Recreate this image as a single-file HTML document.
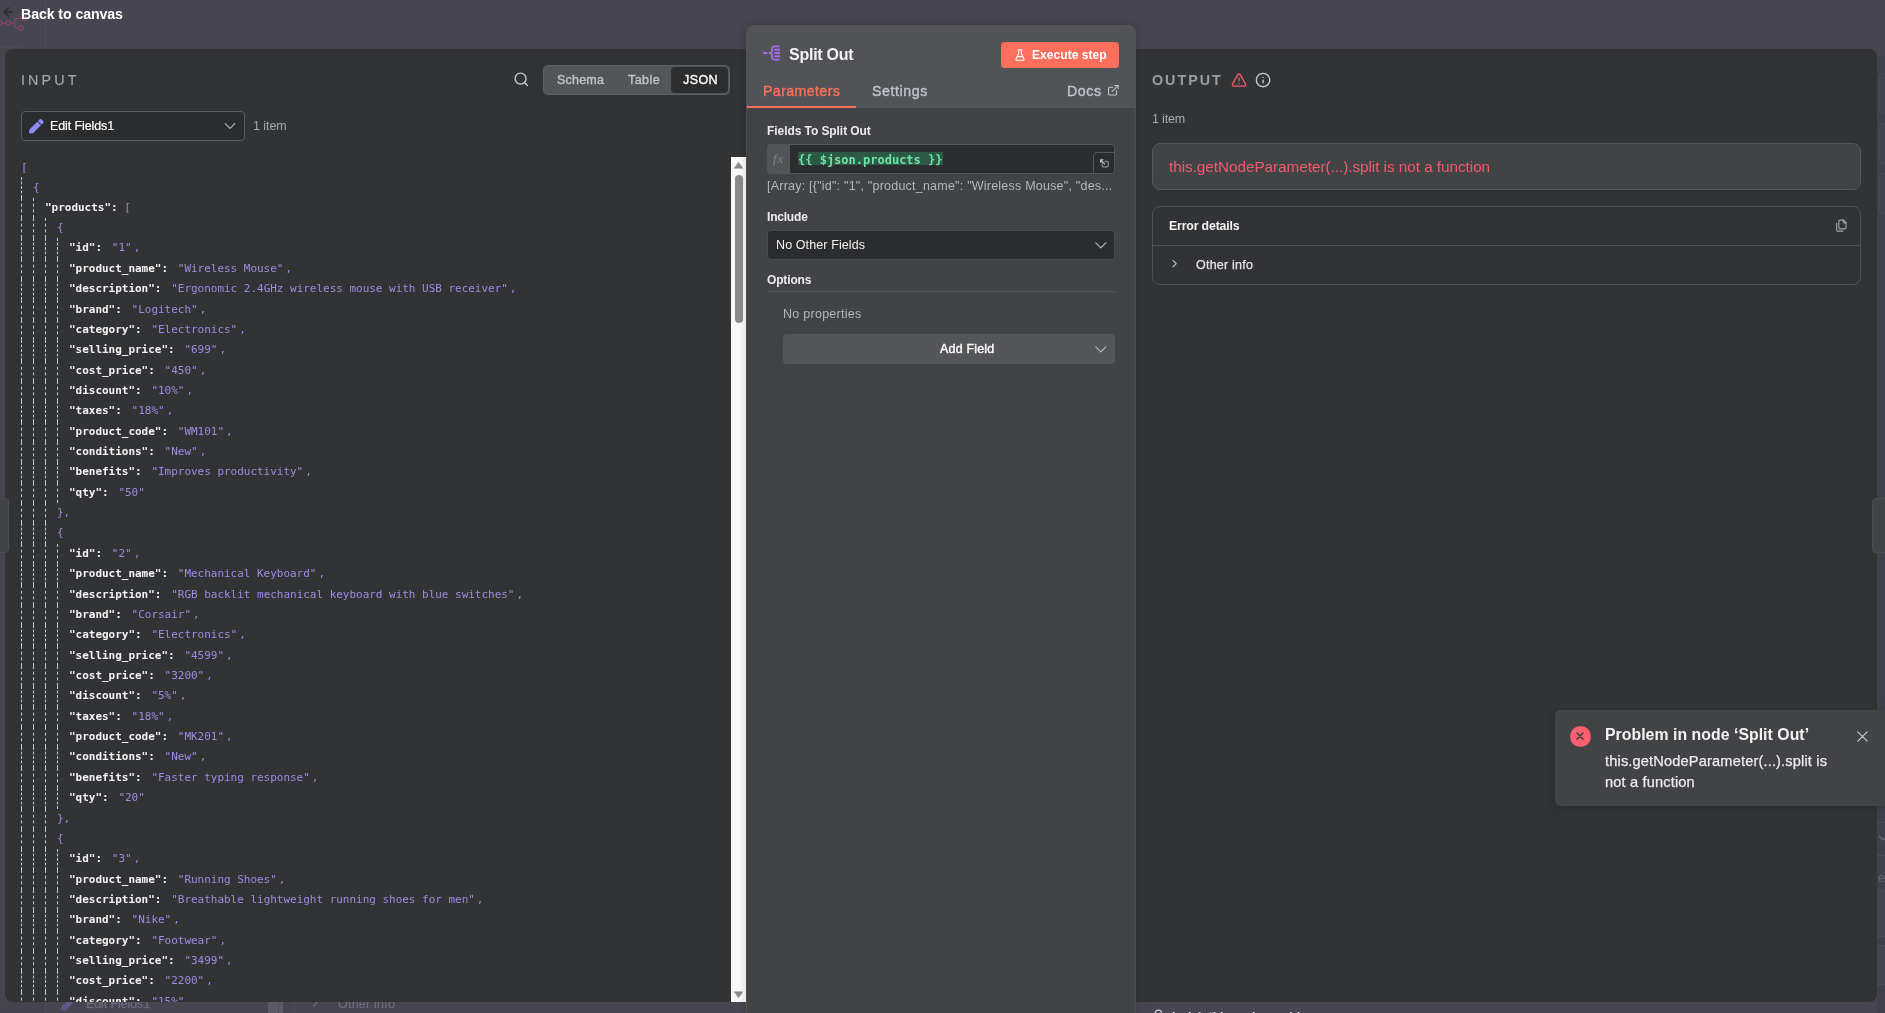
<!DOCTYPE html>
<html lang="en">
<head>
<meta charset="utf-8">
<title>n8n - Split Out</title>
<style>
*{box-sizing:border-box}
html,body{margin:0;padding:0}
body{width:1885px;height:1013px;overflow:hidden;position:relative;background:#464550;font-family:"Liberation Sans",sans-serif;color:#f0f0f2;-webkit-font-smoothing:antialiased}
.a{position:absolute}
.t{position:absolute;white-space:nowrap;line-height:1;will-change:transform}
svg{position:absolute;overflow:visible}

/* panels */
#inp{left:5px;top:49px;width:760px;height:953px;background:#323335;border-radius:8px 0 0 8px}
#outp{left:1120px;top:49px;width:757px;height:953px;background:#323335;border-radius:0 8px 8px 0}
#mid{left:746px;top:25px;width:390px;height:990px;background:#424345;border-radius:8px 8px 0 0;overflow:hidden;box-shadow:0 0 10px rgba(0,0,0,.16)}
#midh{left:0;top:0;width:390px;height:83px;background:#525356}

/* json */
#json{will-change:transform;left:21px;top:157px;width:705px;height:845px;overflow:hidden;font-family:"DejaVu Sans Mono","Liberation Mono",monospace;font-size:11px;letter-spacing:-0.022px;color:#9b8ee0}
.ln{height:20.36px;line-height:20.36px;white-space:pre;overflow:hidden}
.u{display:inline-block;width:12px;height:20.36px;border-left:1px dashed #bfcbd9;vertical-align:top}
.k{color:#f3f3f5;font-weight:bold}
.v{margin-left:1.2px;padding:0 2px}
.br{font-weight:normal}
.s1{position:relative;top:1px}
</style>
</head>
<body>

<!-- backdrop remnants -->
<div class="a" id="bgstuff">
  <div class="a" style="left:45px;top:0;width:1px;height:1013px;background:#4b4a56"></div>
  <div class="a" style="left:0;top:47px;width:28px;height:1px;background:linear-gradient(90deg,#4b4a56 60%,#464550)"></div>
  <!-- right strip remnants -->
  <div class="a" style="left:1877px;top:56px;width:8px;height:957px;background:#41414c"></div>
  <div class="a" style="left:1879px;top:73px;width:20px;height:41px;border:1px solid #4a4a56;border-radius:4px;background:#43434e"></div>
  <div class="a" style="left:1879px;top:123px;width:20px;height:41px;border:1px solid #4a4a56;border-radius:4px;background:#43434e"></div>
  <div class="a" style="left:1879px;top:173px;width:20px;height:41px;border:1px solid #4a4a56;border-radius:4px;background:#43434e"></div>
  <div class="a" style="left:1877px;top:822px;width:8px;height:1px;background:#4c4c58"></div>
  <div class="a" style="left:1877px;top:855px;width:8px;height:1px;background:#4c4c58"></div>
  <div class="a" style="left:1877px;top:890px;width:8px;height:47px;background:#45454f;border-top:1px solid #4c4c58;border-bottom:1px solid #4c4c58"></div>
  <div class="a" style="left:1877px;top:945px;width:8px;height:40px;background:#45454f;border-top:1px solid #4c4c58;border-bottom:1px solid #4c4c58"></div>
  <svg style="left:1877px;top:834px" width="8" height="8" viewBox="0 0 8 8" fill="none" stroke="#6c6c7b" stroke-width="1.200" stroke-linecap="round" stroke-linejoin="round"><path d="M2.500 2.500l3.500 3.500 3.500-3.500"/></svg>
  <div class="t" id="bg_er" style="left:1877.500px;top:871px;font-size:13px;color:#63637a">er</div>
  <!-- bottom strip remnants -->
  <div class="a" style="left:0;top:1002px;width:45px;height:11px;background:#44434e"></div>
  <div class="a" style="left:268px;top:1002px;width:15px;height:11px;background:#5b5a66"></div>
  <div class="a" style="left:277.500px;top:1002px;width:1.500px;height:11px;background:#4e4d59"></div>
  <div class="a" style="left:294px;top:1002px;width:1px;height:11px;background:#4d4c58"></div>
  <svg style="left:60.500px;top:996px" width="15" height="15" viewBox="0 0 512 512"><path fill="#5b5b8e" d="M290.740 93.240l128.020 128.020-277.990 277.990-114.140 12.600C11.350 513.540-1.560 500.620.140 485.340l12.700-114.220 277.900-277.880zm207.200-19.060l-60.110-60.110c-18.750-18.750-49.160-18.750-67.910 0l-56.550 56.550 128.020 128.020 56.550-56.550c18.750-18.760 18.750-49.160 0-67.910z"/></svg>
  <div class="t" id="bg_edit" style="left:86px;top:998px;font-size:12.5px;font-weight:normal;color:#6c6c7b;letter-spacing:-0.11px;-webkit-text-stroke:0.3px #6c6c7b">Edit Fields1</div>
  <svg style="left:312px;top:997px" width="8" height="10" viewBox="0 0 8 10" fill="none" stroke="#6c6c7b" stroke-width="1.200" stroke-linecap="round" stroke-linejoin="round"><path d="M1.500 1l4 4-4 4"/></svg>
  <div class="t" id="bg_other" style="left:338px;top:998px;font-size:12.5px;color:#6c6c7b;letter-spacing:0.22px;-webkit-text-stroke:0.2px #6c6c7b">Other info</div>
  <svg style="left:1151.500px;top:1009px" width="13" height="13" viewBox="0 0 24 24" fill="none" stroke="#c9cbd6" stroke-width="2.200" stroke-linecap="round" stroke-linejoin="round"><path d="M15 14c.2-1 .7-1.700 1.500-2.500 1-.9 1.500-2.200 1.500-3.500A6 6 0 0 0 6 8c0 1 .2 2.200 1.500 3.500.7.700 1.300 1.500 1.500 2.500"/><path d="M9 18h6"/><path d="M10 22h4"/></svg>
  <div class="t" id="bg_wish" style="left:1172px;top:1010.500px;font-size:12px;font-weight:bold;color:#e6e6ec">I wish this node would...</div>
</div>

<!-- back to canvas -->
<svg style="left:0;top:0" width="40" height="36" viewBox="0 0 40 36" fill="none" stroke-linecap="round" stroke-linejoin="round"><g stroke="#7b4560" stroke-width="1.5"><circle cx="-0.3" cy="22.9" r="2.2"/><circle cx="8.2" cy="22.9" r="2.1"/><path d="M2.100 22.900H5.900M10.500 22.900H14.300M21.800 18.300H17a2.500 2.500 0 0 0-2.500 2.500v4.200a2.500 2.500 0 0 0 2.500 2.500h1.500"/><circle cx="24.4" cy="18.200" r="2.200"/><circle cx="20.900" cy="27.900" r="2.200"/></g><path stroke="#2d2e33" stroke-width="1.500" d="M8.400 7.700L4.100 11.900l4.300 4.300M4.300 11.900h7.900"/></svg>
<div class="t" id="back" style="left:21px;top:7px;color:#fff;font-size:14.2px;font-weight:bold;letter-spacing:-0.1px">Back to canvas</div>

<!-- INPUT panel -->
<div class="a" id="inp"></div>
<div class="t" id="t_input" style="left:21px;top:72.8px;color:#a3a6b2;font-size:14.3px;font-weight:normal;letter-spacing:3.15px;-webkit-text-stroke:0.15px #a3a6b2">INPUT</div>

<!-- search icon -->
<svg style="left:512.600px;top:71.400px" width="16.500" height="16.500" viewBox="0 0 24 24" fill="none" stroke="#c6c9d5" stroke-width="2" stroke-linecap="round" stroke-linejoin="round"><circle cx="11" cy="11" r="8"/><path d="m21 21-4.340-4.340"/></svg>

<!-- view tabs -->
<div class="a" style="left:543px;top:65px;width:187px;height:30px;background:#545558;border:1px solid #5f6063;border-radius:5px"></div>
<div class="a" style="left:671px;top:67px;width:57px;height:26px;background:#2c2d2e;border-radius:4px"></div>
<div class="t" id="t_schema" style="left:557px;top:73.8px;color:#c3c5cd;font-size:12.5px;font-weight:normal;letter-spacing:0.2px;-webkit-text-stroke:0.35px #c3c5cd">Schema</div>
<div class="t" id="t_table" style="left:628px;top:73.8px;color:#c3c5cd;font-size:12.5px;font-weight:normal;letter-spacing:0.45px;-webkit-text-stroke:0.35px #c3c5cd">Table</div>
<div class="t" id="t_json" style="left:683px;top:73.8px;color:#fff;font-size:12.5px;font-weight:normal;letter-spacing:0.4px;-webkit-text-stroke:0.35px #fff">JSON</div>

<!-- node select -->
<div class="a" style="left:21px;top:111px;width:224px;height:30px;background:#2b2c2d;border:1px solid #5c5d60;border-radius:4px"></div>
<svg style="left:28.700px;top:118.700px" width="14.600" height="14.600" viewBox="0 0 512 512"><path fill="#8b8dff" d="M290.740 93.240l128.020 128.020-277.990 277.990-114.140 12.600C11.350 513.540-1.560 500.620.140 485.340l12.700-114.220 277.900-277.880zm207.200-19.060l-60.110-60.110c-18.750-18.750-49.160-18.750-67.910 0l-56.550 56.550 128.020 128.020 56.550-56.550c18.750-18.760 18.750-49.160 0-67.910z"/></svg>
<div class="t" id="t_editfields" style="left:50px;top:120.0px;color:#fff;font-size:12.5px;font-weight:normal;letter-spacing:-0.11px;-webkit-text-stroke:0.2px #fff">Edit Fields1</div>
<svg style="left:220px;top:118px" width="20" height="16" viewBox="0 0 20 16" fill="none" stroke="#a9acb8" stroke-width="1.250" stroke-linecap="round" stroke-linejoin="round"><path d="M5.300 5.700L10 10.400l4.700-4.700"/></svg>
<div class="t" id="t_1item" style="left:253px;top:120.0px;color:#a3a5ae;font-size:12.5px;font-weight:normal;letter-spacing:-0.06px">1 item</div>

<div class="a" id="json">
<div class="ln"><b class="br s1">[</b></div>
<div class="ln"><i class="u"></i><b class="br s1">{</b></div>
<div class="ln"><i class="u"></i><i class="u l"></i><span class="k">"products":</span> <b class="br">[</b></div>
<div class="ln"><i class="u"></i><i class="u l"></i><i class="u l"></i><b class="br">{</b></div>
<div class="ln"><i class="u"></i><i class="u l"></i><i class="u l"></i><i class="u l"></i><span class="k">"id":</span> <span class="v">"1"</span>,</div>
<div class="ln"><i class="u"></i><i class="u l"></i><i class="u l"></i><i class="u l"></i><span class="k">"product_name":</span> <span class="v">"Wireless Mouse"</span>,</div>
<div class="ln"><i class="u"></i><i class="u l"></i><i class="u l"></i><i class="u l"></i><span class="k">"description":</span> <span class="v">"Ergonomic 2.4GHz wireless mouse with USB receiver"</span>,</div>
<div class="ln"><i class="u"></i><i class="u l"></i><i class="u l"></i><i class="u l"></i><span class="k">"brand":</span> <span class="v">"Logitech"</span>,</div>
<div class="ln"><i class="u"></i><i class="u l"></i><i class="u l"></i><i class="u l"></i><span class="k">"category":</span> <span class="v">"Electronics"</span>,</div>
<div class="ln"><i class="u"></i><i class="u l"></i><i class="u l"></i><i class="u l"></i><span class="k">"selling_price":</span> <span class="v">"699"</span>,</div>
<div class="ln"><i class="u"></i><i class="u l"></i><i class="u l"></i><i class="u l"></i><span class="k">"cost_price":</span> <span class="v">"450"</span>,</div>
<div class="ln"><i class="u"></i><i class="u l"></i><i class="u l"></i><i class="u l"></i><span class="k">"discount":</span> <span class="v">"10%"</span>,</div>
<div class="ln"><i class="u"></i><i class="u l"></i><i class="u l"></i><i class="u l"></i><span class="k">"taxes":</span> <span class="v">"18%"</span>,</div>
<div class="ln"><i class="u"></i><i class="u l"></i><i class="u l"></i><i class="u l"></i><span class="k">"product_code":</span> <span class="v">"WM101"</span>,</div>
<div class="ln"><i class="u"></i><i class="u l"></i><i class="u l"></i><i class="u l"></i><span class="k">"conditions":</span> <span class="v">"New"</span>,</div>
<div class="ln"><i class="u"></i><i class="u l"></i><i class="u l"></i><i class="u l"></i><span class="k">"benefits":</span> <span class="v">"Improves productivity"</span>,</div>
<div class="ln"><i class="u"></i><i class="u l"></i><i class="u l"></i><i class="u l"></i><span class="k">"qty":</span> <span class="v">"50"</span></div>
<div class="ln"><i class="u"></i><i class="u l"></i><i class="u l"></i><b class="br">},</b></div>
<div class="ln"><i class="u"></i><i class="u l"></i><i class="u l"></i><b class="br">{</b></div>
<div class="ln"><i class="u"></i><i class="u l"></i><i class="u l"></i><i class="u l"></i><span class="k">"id":</span> <span class="v">"2"</span>,</div>
<div class="ln"><i class="u"></i><i class="u l"></i><i class="u l"></i><i class="u l"></i><span class="k">"product_name":</span> <span class="v">"Mechanical Keyboard"</span>,</div>
<div class="ln"><i class="u"></i><i class="u l"></i><i class="u l"></i><i class="u l"></i><span class="k">"description":</span> <span class="v">"RGB backlit mechanical keyboard with blue switches"</span>,</div>
<div class="ln"><i class="u"></i><i class="u l"></i><i class="u l"></i><i class="u l"></i><span class="k">"brand":</span> <span class="v">"Corsair"</span>,</div>
<div class="ln"><i class="u"></i><i class="u l"></i><i class="u l"></i><i class="u l"></i><span class="k">"category":</span> <span class="v">"Electronics"</span>,</div>
<div class="ln"><i class="u"></i><i class="u l"></i><i class="u l"></i><i class="u l"></i><span class="k">"selling_price":</span> <span class="v">"4599"</span>,</div>
<div class="ln"><i class="u"></i><i class="u l"></i><i class="u l"></i><i class="u l"></i><span class="k">"cost_price":</span> <span class="v">"3200"</span>,</div>
<div class="ln"><i class="u"></i><i class="u l"></i><i class="u l"></i><i class="u l"></i><span class="k">"discount":</span> <span class="v">"5%"</span>,</div>
<div class="ln"><i class="u"></i><i class="u l"></i><i class="u l"></i><i class="u l"></i><span class="k">"taxes":</span> <span class="v">"18%"</span>,</div>
<div class="ln"><i class="u"></i><i class="u l"></i><i class="u l"></i><i class="u l"></i><span class="k">"product_code":</span> <span class="v">"MK201"</span>,</div>
<div class="ln"><i class="u"></i><i class="u l"></i><i class="u l"></i><i class="u l"></i><span class="k">"conditions":</span> <span class="v">"New"</span>,</div>
<div class="ln"><i class="u"></i><i class="u l"></i><i class="u l"></i><i class="u l"></i><span class="k">"benefits":</span> <span class="v">"Faster typing response"</span>,</div>
<div class="ln"><i class="u"></i><i class="u l"></i><i class="u l"></i><i class="u l"></i><span class="k">"qty":</span> <span class="v">"20"</span></div>
<div class="ln"><i class="u"></i><i class="u l"></i><i class="u l"></i><b class="br">},</b></div>
<div class="ln"><i class="u"></i><i class="u l"></i><i class="u l"></i><b class="br">{</b></div>
<div class="ln"><i class="u"></i><i class="u l"></i><i class="u l"></i><i class="u l"></i><span class="k">"id":</span> <span class="v">"3"</span>,</div>
<div class="ln"><i class="u"></i><i class="u l"></i><i class="u l"></i><i class="u l"></i><span class="k">"product_name":</span> <span class="v">"Running Shoes"</span>,</div>
<div class="ln"><i class="u"></i><i class="u l"></i><i class="u l"></i><i class="u l"></i><span class="k">"description":</span> <span class="v">"Breathable lightweight running shoes for men"</span>,</div>
<div class="ln"><i class="u"></i><i class="u l"></i><i class="u l"></i><i class="u l"></i><span class="k">"brand":</span> <span class="v">"Nike"</span>,</div>
<div class="ln"><i class="u"></i><i class="u l"></i><i class="u l"></i><i class="u l"></i><span class="k">"category":</span> <span class="v">"Footwear"</span>,</div>
<div class="ln"><i class="u"></i><i class="u l"></i><i class="u l"></i><i class="u l"></i><span class="k">"selling_price":</span> <span class="v">"3499"</span>,</div>
<div class="ln"><i class="u"></i><i class="u l"></i><i class="u l"></i><i class="u l"></i><span class="k">"cost_price":</span> <span class="v">"2200"</span>,</div>
<div class="ln"><i class="u"></i><i class="u l"></i><i class="u l"></i><i class="u l"></i><span class="k">"discount":</span> <span class="v">"15%"</span>,</div>
<div class="ln"><i class="u"></i><i class="u l"></i><i class="u l"></i><i class="u l"></i><span class="k">"taxes":</span> <span class="v">"12%"</span>,</div>
</div>

<!-- json scrollbar -->
<div class="a" style="left:731px;top:157px;width:15px;height:845px;background:#fafafa"></div>
<div class="a" style="left:734.5px;top:175px;width:8.5px;height:148px;background:#8b8b8b;border-radius:5px"></div>
<svg style="left:734px;top:162px" width="9" height="7" viewBox="0 0 9 7"><path d="M4.5 0.3L8.8 6.2H0.2z" fill="#8b8b8b" stroke="#8b8b8b" stroke-width="0.6" stroke-linejoin="round"/></svg>
<svg style="left:734px;top:991px" width="9" height="7" viewBox="0 0 9 7"><path d="M4.5 6.7L8.8 0.8H0.2z" fill="#8b8b8b" stroke="#8b8b8b" stroke-width="0.6" stroke-linejoin="round"/></svg>

<!-- left drag handle -->
<div class="a" style="left:-8px;top:498px;width:16.5px;height:55px;background:#424345;border:1px solid #4c4d50;border-radius:4px"></div>

<!-- OUTPUT panel -->
<div class="a" id="outp"></div>
<div class="t" id="t_output" style="left:1152px;top:72.8px;color:#9b9da6;font-size:14.3px;font-weight:bold;letter-spacing:2px">OUTPUT</div>
<svg style="left:1231px;top:71.650px" width="16.150" height="16.150" viewBox="0 0 24 24" fill="none" stroke="#f25a6c" stroke-width="2" stroke-linecap="round" stroke-linejoin="round"><path d="m21.730 18-8-14a2 2 0 0 0-3.480 0l-8 14A2 2 0 0 0 4 21h16a2 2 0 0 0 1.730-3"/><path d="M12 9v4"/><path d="M12 17h.01"/></svg>
<svg style="left:1255px;top:71.900px" width="16.150" height="16.150" viewBox="0 0 24 24" fill="none" stroke="#c8cbd7" stroke-width="2" stroke-linecap="round" stroke-linejoin="round"><circle cx="12" cy="12" r="10"/><path d="M12 16v-4"/><path d="M12 8h.01"/></svg>
<div class="t" id="t_1item2" style="left:1152px;top:113.0px;color:#a9abb4;font-size:12.5px;font-weight:normal;letter-spacing:-0.16px">1 item</div>

<div class="a" style="left:1152px;top:143px;width:709px;height:47px;background:#424345;border:1px solid #56575a;border-radius:8px"></div>
<div class="t" id="t_err" style="left:1169px;top:159px;color:#f45b6e;font-size:15.3px;font-weight:normal;letter-spacing:-0.04px">this.getNodeParameter(...).split is not a function</div>

<div class="a" style="left:1152px;top:206px;width:709px;height:79px;border:1px solid #505154;border-radius:8px"></div>
<div class="a" style="left:1153px;top:245px;width:707px;height:1px;background:#505154"></div>
<div class="t" id="t_errdet" style="left:1169px;top:220.0px;color:#f3f3f5;font-size:12.3px;font-weight:bold;letter-spacing:-0.15px">Error details</div>
<svg style="left:1834.800px;top:219.350px" width="13.200" height="13.200" viewBox="0 0 24 24" fill="none" stroke-linecap="round" stroke-linejoin="round" stroke="#a3a6b1" stroke-width="2"><path d="M20 7h-3a2 2 0 0 1-2-2V2"/><path d="M9 18a2 2 0 0 1-2-2V4a2 2 0 0 1 2-2h7l4 4v10a2 2 0 0 1-2 2Z"/><path d="M3 7.600v12.800A1.600 1.600 0 0 0 4.600 22h9.800"/></svg>
<svg style="left:1167.900px;top:256.850px" width="13.200" height="13.200" viewBox="0 0 24 24" fill="none" stroke-linecap="round" stroke-linejoin="round" stroke="#c8cad3" stroke-width="2"><path d="m9 18 6-6-6-6"/></svg>
<div class="t" id="t_other" style="left:1196px;top:259.0px;color:#e3e3e7;font-size:12.5px;font-weight:normal;letter-spacing:0.22px;-webkit-text-stroke:0.25px #e3e3e7">Other info</div>

<!-- right drag handle -->
<div class="a" style="left:1872px;top:498px;width:20px;height:55px;background:#424345;border:1px solid #4c4d50;border-radius:4px"></div>

<!-- middle panel -->
<div class="a" id="mid">
  <div class="a" id="midh"></div>
  <div class="a" style="left:0;top:83px;width:1px;height:910px;background:#4f5053"></div>
  <div class="a" style="left:389px;top:83px;width:1px;height:910px;background:#4c4d50"></div>
  <div class="a" style="left:1px;top:81px;width:109px;height:2px;background:#ff6f5c"></div>
</div>
<!-- split out icon -->
<svg style="left:756px;top:38px" width="40" height="30" viewBox="0 0 40 30" fill="none" stroke="#a56ee8" stroke-width="1.900" stroke-linejoin="round"><path d="M7.100 15H11.500"/><path d="M22.700 8.400H18.600a2.700 2.700 0 0 0-2.700 2.700V13c0 1.200-.800 2-2.300 2 1.500 0 2.300.800 2.300 2v1.900a2.700 2.700 0 0 0 2.700 2.700h4.100" stroke-linecap="round"/><path d="M18.200 11.700H24.100M18.200 15H24.100M18.200 18.300H24.100"/></svg>
<div class="t" id="t_split" style="left:789px;top:46.8px;color:#f3f3f5;font-size:16px;font-weight:bold;letter-spacing:-0.25px">Split Out</div>
<div class="a" style="left:1001px;top:42px;width:118px;height:26px;background:#ff6f5c;border-radius:4px"></div>
<svg style="left:1015px;top:49px" width="10" height="12" viewBox="0 0 10 12" fill="none" stroke="#fff" stroke-width="1.100" stroke-linecap="round" stroke-linejoin="round"><path d="M3 0.700h4M3.700 0.700v3.500L1 10a0.900 0.900 0 0 0 .8 1.300h6.400A0.900 0.900 0 0 0 9 10L6.300 4.200V0.700M2.300 7.600h5.400"/></svg>
<div class="t" id="t_exec" style="left:1032px;top:49px;color:#fff;font-size:12.1px;font-weight:bold;letter-spacing:0px">Execute step</div>
<div class="t" id="t_params" style="left:763px;top:84px;color:#ff6f5c;font-size:14.2px;font-weight:normal;letter-spacing:0.39px;-webkit-text-stroke:0.35px #ff6f5c">Parameters</div>
<div class="t" id="t_settings" style="left:872px;top:84px;color:#c3c5cd;font-size:14.2px;font-weight:normal;letter-spacing:0.58px;-webkit-text-stroke:0.35px #c3c5cd">Settings</div>
<div class="t" id="t_docs" style="left:1067px;top:84px;color:#c3c5cd;font-size:14.2px;font-weight:normal;letter-spacing:0.6px;-webkit-text-stroke:0.35px #c3c5cd">Docs</div>
<svg style="left:1106.800px;top:83.650px" width="12.650" height="12.650" viewBox="0 0 24 24" fill="none" stroke-linecap="round" stroke-linejoin="round" stroke="#c5c8d4" stroke-width="2"><path d="M15 3h6v6"/><path d="M10 14 21 3"/><path d="M18 13v6a2 2 0 0 1-2 2H5a2 2 0 0 1-2-2V8a2 2 0 0 1 2-2h6"/></svg>

<div class="t" id="t_fields" style="left:767px;top:125px;color:#ececef;font-size:12px;font-weight:bold;letter-spacing:-0.07px">Fields To Split Out</div>
<div class="a" style="left:767px;top:144px;width:348px;height:30px;background:#2b2c2d;border:1px solid #55565a;border-radius:4px"></div>
<div class="a" style="left:767px;top:144px;width:23px;height:30px;background:#535457;border-radius:4px 0 0 4px"></div>
<div class="t" id="t_fx" style="left:773px;top:152px;letter-spacing:0.800px;font-size:13px;font-style:italic;font-family:'Liberation Serif',serif;color:#7e808a">fx</div>
<div class="a" style="left:798px;top:152px;width:144.500px;height:13px;background:#2d5a46"></div>
<div class="t" id="t_expr" style="left:798px;top:153.0px;font-size:12px;font-weight:bold;font-family:'DejaVu Sans Mono','Liberation Mono',monospace;color:#6fe3a4;line-height:14px">{{ $json.products }}</div>
<div class="a" style="left:1093px;top:152px;width:22px;height:22px;background:#2b2c2d;border:1px solid #55565a;border-radius:4px 0 4px 0"></div>
<svg style="left:1096px;top:156px" width="16" height="14" viewBox="0 0 16 14" fill="none" stroke-linecap="round" stroke-linejoin="round" stroke-width="1.100"><path stroke="#9a9ca3" d="M6.200 7.400v2.400a1.200 1.200 0 0 0 1.200 1.200h3.600a1.200 1.200 0 0 0 1.200-1.200V6.400a1.200 1.200 0 0 0-1.200-1.200H8.900"/><path stroke="#c8cad2" d="M8.600 7.800l-4-4M4.600 6.300V3.800h2.500"/></svg>
<div class="t" id="t_hint" style="left:767px;top:180px;color:#b5b7bf;font-size:12.5px;font-weight:normal;letter-spacing:0.22px">[Array: [{"id": "1", "product_name": "Wireless Mouse", "des...</div>

<div class="t" id="t_include" style="left:767px;top:211px;color:#ececef;font-size:12px;font-weight:bold;letter-spacing:-0.2px">Include</div>
<div class="a" style="left:767px;top:230px;width:348px;height:29.500px;background:#2b2c2d;border:1px solid #4b4c4f;border-radius:4px"></div>
<div class="t" id="t_noother" style="left:776px;top:238.8px;color:#f3f3f5;font-size:12.5px;font-weight:normal;letter-spacing:0.11px">No Other Fields</div>
<svg style="left:1094.500px;top:242px" width="12" height="7" viewBox="0 0 12 7" fill="none" stroke="#b4b7c2" stroke-width="1.200" stroke-linecap="round" stroke-linejoin="round"><path d="M0.800 0.800L5.800 5.800l5-5"/></svg>

<div class="t" id="t_options" style="left:767px;top:274px;color:#ececef;font-size:12px;font-weight:bold;letter-spacing:-0.15px">Options</div>
<div class="a" style="left:767px;top:291px;width:348px;height:1px;background:#56575a"></div>
<div class="t" id="t_noprops" style="left:783px;top:308.0px;color:#b5b7bf;font-size:12.5px;font-weight:normal;letter-spacing:0.27px">No properties</div>
<div class="a" style="left:783px;top:334px;width:332px;height:30px;background:#545558;border-radius:4px"></div>
<div class="t" id="t_addfield" style="left:940px;top:343.0px;color:#fff;font-size:12.5px;font-weight:normal;letter-spacing:0.17px;-webkit-text-stroke:0.35px #fff">Add Field</div>
<svg style="left:1094.500px;top:346px" width="12" height="7" viewBox="0 0 12 7" fill="none" stroke="#b4b7c2" stroke-width="1.200" stroke-linecap="round" stroke-linejoin="round"><path d="M0.800 0.800L5.800 5.800l5-5"/></svg>

<!-- toast -->
<div class="a" style="left:1555px;top:710px;width:340px;height:96px;background:#424345;border-radius:5px;box-shadow:0 2px 10px rgba(0,0,0,.18)"></div>
<div class="a" style="left:1569.500px;top:725.500px;width:21px;height:21px;border-radius:50%;background:#ff5f6e"></div>
<svg style="left:1576px;top:732px" width="8" height="8" viewBox="0 0 8 8" fill="none" stroke="#3b3c3f" stroke-width="1.500" stroke-linecap="round"><path d="M1 1l6 6M7 1L1 7"/></svg>
<div class="t" id="t_toast" style="left:1605px;top:727.0px;color:#f3f3f5;font-size:15.8px;font-weight:bold;letter-spacing:0.05px">Problem in node ‘Split Out’</div>
<div class="t" id="t_toast1" style="left:1605px;top:751.4px;line-height:21px;color:#ececef;font-size:14.6px;font-weight:normal;letter-spacing:0.16px;-webkit-text-stroke:0.25px #ececef">this.getNodeParameter(...).split is</div>
<div class="t" id="t_toast2" style="left:1605px;top:772.4px;line-height:21px;color:#ececef;font-size:14.6px;font-weight:normal;letter-spacing:0.16px;-webkit-text-stroke:0.25px #ececef">not a function</div>
<svg style="left:1857px;top:731px" width="11" height="11" viewBox="0 0 11 11" fill="none" stroke="#cfd1d8" stroke-width="1.100" stroke-linecap="round"><path d="M0.800 0.800l9.400 9.400M10.200 0.800L0.800 10.200"/></svg>

</body>
</html>
